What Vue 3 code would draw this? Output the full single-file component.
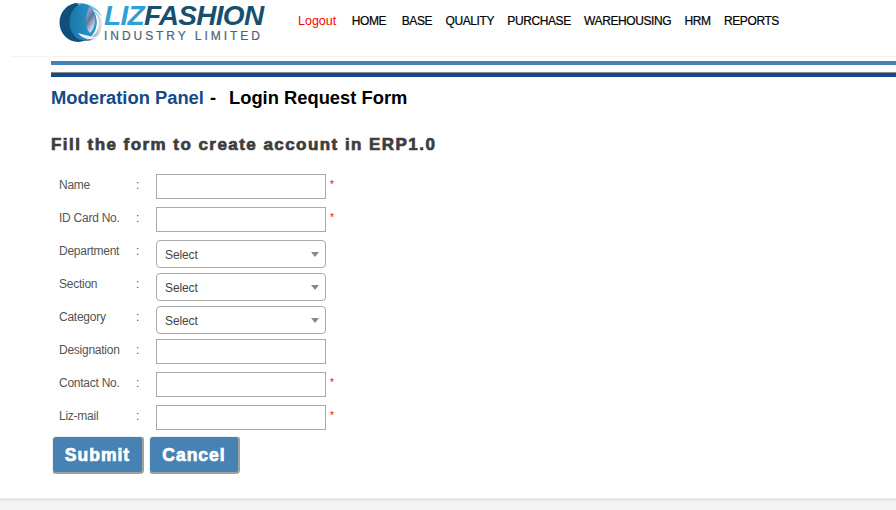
<template>
  <div class="page">
    <header class="top">
      <div class="logo">
        <svg class="mark" width="48" height="46" viewBox="0 0 48 46">
          <defs>
            <linearGradient id="body" x1="0" y1="0" x2="1" y2="0">
              <stop offset="0" stop-color="#1a74a8" />
              <stop offset="1" stop-color="#2b9ccf" />
            </linearGradient>
            <linearGradient id="leaf" x1="0" y1="0" x2="0.5" y2="1">
              <stop offset="0" stop-color="#b9c8de" />
              <stop offset="0.55" stop-color="#5f76a0" />
              <stop offset="1" stop-color="#dfe4ee" />
            </linearGradient>
            <linearGradient id="swoosh" x1="0" y1="0" x2="1" y2="0">
              <stop offset="0" stop-color="#3f5f8c" />
              <stop offset="1" stop-color="#e6e9f0" />
            </linearGradient>
          </defs>
          <ellipse cx="20" cy="22.5" rx="18.5" ry="19.5" fill="#0f4f7a" />
          <path d="M19 3c11-1 22 5 25 14-5-6-10-9-15-9-5 0-8-2-10-5Z" fill="#6cc4e8" />
          <ellipse cx="25" cy="22" rx="13.5" ry="18" fill="url(#body)" />
          <path d="M30 8c7 3 11 9 11 15 0 8-6 15-15 18 12 1 18-8 18-17 0-6-4-12-14-16Z" fill="url(#swoosh)" />
          <path d="M32 6c-3 6-5 12-4 18 0 4 2 7 4 9 3-3 5-8 5-13 0-5-2-10-5-14Z" fill="url(#leaf)" />
          <path d="M20 33c3 4 7 6 12 6 4 0 7-1 9-4-3 2-7 2-10 1-4-1-8-2-11-3Z" fill="#eef2f7" />
        </svg>
        <div class="wordmark">
          <div class="liz"><span class="light">LIZ</span>FASHION</div>
          <div class="industry">INDUSTRY LIMITED</div>
        </div>
      </div>
      <nav class="nav">
        <a class="logout">Logout</a>
        <a v-for="item in menu" :key="item">{{ item }}</a>
      </nav>
    </header>

    <div class="rule-faint"></div>
    <div class="rule-light"></div>
    <div class="rule-dark"></div>

    <main class="content">
      <h1><span class="panel">Moderation Panel</span><span class="dash">-</span>Login Request Form</h1>
      <h2>Fill the form to create account in ERP1.0</h2>

      <form class="form" @submit.prevent>
        <div v-for="field in fields" :key="field.label" class="row">
          <label>{{ field.label }}</label>
          <span class="colon">:</span>
          <div v-if="field.select" class="select">
            <span>Select</span>
            <i class="arrow"></i>
          </div>
          <input v-else type="text" />
          <span v-if="field.required" class="star">*</span>
        </div>
        <div class="buttons">
          <button type="submit">Submit</button>
          <button type="button">Cancel</button>
        </div>
      </form>
    </main>

    <footer class="foot"></footer>
  </div>
</template>

<script setup>
const menu = ['HOME', 'BASE', 'QUALITY', 'PURCHASE', 'WAREHOUSING', 'HRM', 'REPORTS']

const fields = [
  { label: 'Name', required: true },
  { label: 'ID Card No.', required: true },
  { label: 'Department', select: true },
  { label: 'Section', select: true },
  { label: 'Category', select: true },
  { label: 'Designation' },
  { label: 'Contact No.', required: true },
  { label: 'Liz-mail', required: true },
]
</script>

<style>
html,
body {
  margin: 0;
  background: #fff;
  overflow: hidden;
}
</style>

<style scoped>
.page {
  position: relative;
  width: 896px;
  height: 510px;
  font-family: 'Liberation Sans', Arial, sans-serif;
  overflow: hidden;
}

.top {
  display: flex;
  height: 56px;
  margin-left: 58px;
}

.logo {
  display: flex;
  width: 240px;
}

.mark {
  flex: none;
}

.wordmark {
  margin-left: -2px;
  padding-top: 2px;
}

.liz {
  font-size: 28px;
  line-height: 28px;
  font-weight: bold;
  font-style: italic;
  letter-spacing: -0.7px;
  color: #17506f;
  white-space: nowrap;
}

.light {
  color: #2f9fd6;
}

.industry {
  margin: 0;
  font-size: 12px;
  line-height: 12px;
  letter-spacing: 2.95px;
  color: #4f6278;
  white-space: nowrap;
  -webkit-text-stroke: 0.2px #4f6278;
}

.nav {
  display: flex;
  align-items: flex-start;
  padding-top: 14px;
  font-size: 12px;
  line-height: 15px;
  letter-spacing: -0.4px;
  color: #000;
  white-space: nowrap;
  -webkit-text-stroke: 0.2px #000;
}

.nav a {
  margin-right: 13.3px;
}

.nav a:nth-child(2) {
  margin-right: 15.6px;
}

.nav .logout {
  color: #f00;
  font-size: 12.5px;
  letter-spacing: 0;
  margin-right: 15.5px;
  -webkit-text-stroke: 0;
}

.rule-faint {
  height: 1px;
  margin-left: 11px;
  background: #f3f3f3;
}

.rule-light {
  height: 4px;
  margin: 4px 0 0 51px;
  background: #4682b4;
}

.rule-dark {
  height: 4px;
  margin: 7px 0 0 51px;
  border-top: 1px solid #8a8a8a;
  background: #134a87;
}

.content {
  padding-left: 51px;
}

h1 {
  margin: 10px 0 0;
  font-size: 18.35px;
  line-height: 21px;
  font-weight: bold;
  color: #000;
}

.panel {
  color: #134a87;
}

.dash {
  margin: 0 13px 0 6px;
}

h2 {
  margin: 27px 0 0;
  font-size: 17px;
  line-height: 20px;
  font-weight: bold;
  letter-spacing: 1.45px;
  color: #3d3d3d;
  -webkit-text-stroke: 0.7px #3d3d3d;
}

.form {
  margin-top: 19px;
}

.row {
  display: flex;
  align-items: flex-start;
  height: 33px;
  padding-left: 8px;
  font-size: 12px;
  letter-spacing: -0.25px;
  color: #555;
}

label {
  width: 77px;
  line-height: 23px;
}

.colon {
  width: 20px;
  line-height: 23px;
}

input {
  box-sizing: border-box;
  width: 170px;
  height: 25px;
  margin: 0;
  padding: 0 8px;
  border: 1px solid #a9a9a9;
  background: #fff;
  outline: none;
}

.select {
  position: relative;
  box-sizing: border-box;
  display: flex;
  align-items: center;
  width: 170px;
  height: 28px;
  padding: 1px 8px 0;
  border: 1px solid #a9a9a9;
  border-radius: 4px;
  letter-spacing: -0.1px;
  color: #444;
  background: #fff;
}

.arrow {
  position: absolute;
  right: 6px;
  top: 11px;
  width: 0;
  height: 0;
  border-left: 4px solid transparent;
  border-right: 4px solid transparent;
  border-top: 5px solid #888;
}

.star {
  margin-left: 4px;
  color: #f00;
  font-size: 10px;
  line-height: 22px;
}

.buttons {
  display: flex;
  gap: 5px;
  padding-left: 1px;
  margin-top: -2px;
}

button {
  box-sizing: border-box;
  height: 38px;
  padding: 2px 0 0;
  border: 1px solid #eef0f2;
  border-right: 2px solid #a0a0a0;
  border-bottom: 2px solid #a0a0a0;
  border-radius: 4px;
  background: #4682b4;
  color: #fff;
  font-family: inherit;
  font-size: 17.5px;
  font-weight: bold;
  letter-spacing: 1px;
  -webkit-text-stroke: 0.7px #fff;
}

button:first-child {
  width: 92px;
}

button:last-child {
  width: 91px;
}

.foot {
  position: absolute;
  left: 0;
  right: 0;
  bottom: 0;
  height: 9px;
  border-top: 3px solid #e6e6e6;
  background: #f3f3f2;
}
</style>
